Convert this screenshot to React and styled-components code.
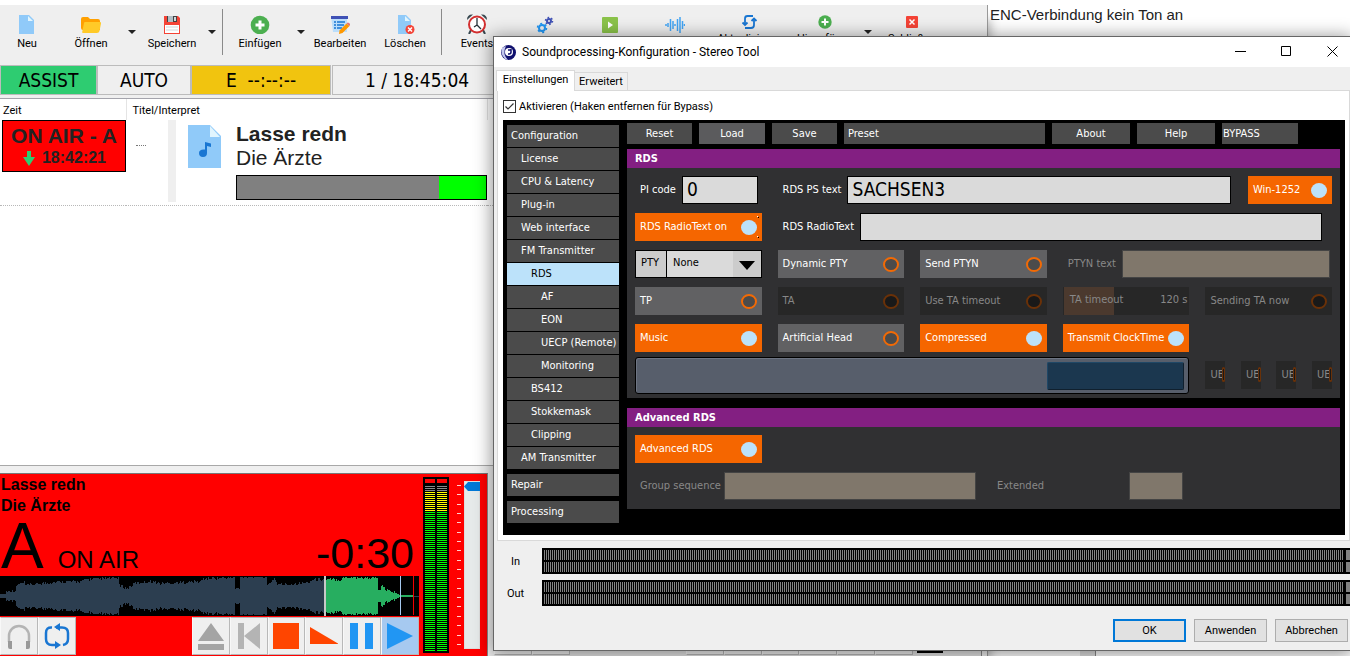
import React from "react";
import styled, { createGlobalStyle, css } from "styled-components";

const UI_FONT = 'Roboto, "Noto Sans", sans-serif';
const PANEL_FONT = '"DejaVu Sans Condensed", "DejaVu Sans", sans-serif';
const DECK_FONT = '"Liberation Sans", Arial, sans-serif';

const GlobalStyle = createGlobalStyle`
  * {
    box-sizing: border-box;
  }

  body {
    margin: 0;
    overflow: hidden;
    background: #fff;
    color: #000;
    font-family: ${UI_FONT};
    font-size: 11px;
  }

  button, input, select {
    margin: 0;
    border-radius: 0;
    font: inherit;
    color: inherit;
  }

  svg {
    display: block;
    flex: none;
  }
`

const Desktop = styled.div`
  position: relative;
  min-height: 100vh;
  overflow: hidden;
`

/* ---------- browser page behind the player ---------- */

const BackPage = styled.section`
  position: absolute;
  top: 0;
  right: 0;
  bottom: 0;
  width: 362px;
  display: flex;
  flex-direction: column;
  justify-content: space-between;
  background: #fff;

  p {
    margin: 0;
    padding: 6px 2px;
    font-family: ${DECK_FONT};
    font-size: 15px;
    line-height: 18px;
    color: #222;
  }
`

const BackFooter = styled.div`
  display: flex;
  height: 8px;

  div {
    width: 92px;
  }

  span {
    width: 16px;
    background: #e0e0e0;
    border-right: 1px solid #888;
  }
`

/* ---------- main window ---------- */

const MainWindow = styled.main`
  position: absolute;
  top: 5px;
  left: 0;
  right: 362px;
  bottom: 0;
  display: flex;
  flex-direction: column;
  border-right: 1px solid #999;
  background: #efefef;
  box-shadow: 6px 10px 10px -4px rgba(0, 0, 0, .3);
`

const Toolbar = styled.div`
  display: flex;
  align-items: flex-start;
  height: 60px;
  padding-top: 4px;
`

const ToolButton = styled.button`
  display: flex;
  flex-direction: column;
  align-items: center;
  width: ${props => props.$width}px;
  padding: ${props => (props.$raised ? 2 : 5)}px 0 0;
  border: 0;
  background: none;
  font-size: 11px;
  line-height: 16px;
  white-space: nowrap;

  svg {
    margin-bottom: ${props => (props.$raised ? 0 : 2)}px;
  }
`

const DropButton = styled.button`
  width: ${props => props.$width}px;
  height: 46px;
  padding: 0;
  border: 0;
  background: none;

  svg {
    margin: 0 auto;
  }
`

const Separator = styled.div`
  width: 1px;
  height: 46px;
  margin-left: 6px;
  background: #8a8a8a;
`

const StatusBar = styled.div`
  display: flex;
  height: 30px;
`

const StatusCell = styled.div`
  width: ${props => props.$width}px;
  margin-right: ${props => props.$after || 0}px;
  border: 1px solid #bcbcbc;
  background: ${props => props.$color || "#efefef"};
  font-family: ${PANEL_FONT};
  font-size: 19px;
  line-height: 28px;
  text-align: center;
  white-space: pre;
`

const ListArea = styled.div`
  flex: 1;
  margin-top: 3px;
  border-top: 1px solid #a4a4ac;
  border-bottom: 1px solid #a8a8a8;
  background: #fff;
`

const PlayTable = styled.table`
  width: 100%;
  table-layout: fixed;
  border-collapse: collapse;

  th {
    height: 21px;
    padding: 2px 0 0 3px;
    font-size: 11px;
    font-weight: normal;
    line-height: 16px;
    text-align: left;
    border-right: 1px solid #e4e4e4;
  }

  th + th {
    padding-left: 6px;
  }

  td {
    height: 85px;
    padding: 0;
    vertical-align: top;
    border-bottom: 1px dotted #b8b8b8;
  }
`

const OnAirCell = styled.div`
  height: 52px;
  margin-left: 2px;
  padding-top: 3px;
  border: 1px solid #000;
  background: #f00;
  color: #222;
  font-family: ${DECK_FONT};
  font-size: 21px;
  font-weight: bold;
  line-height: 24px;
  text-align: center;
  white-space: nowrap;

  div {
    display: flex;
    justify-content: center;
    align-items: center;
    gap: 7px;
    font-size: 16px;
    line-height: 20px;
  }
`

const TrackCell = styled.div`
  display: flex;
  height: 82px;
`

const TrackDots = styled.div`
  width: 42px;
  padding: 25px 0 0 10px;

  &::after {
    content: "";
    display: block;
    width: 10px;
    border-top: 1px dotted #777;
  }
`

const TrackStrip = styled.div`
  width: 8px;
  margin-right: 12px;
  background: #efefef;
`

const TrackArt = styled.div`
  padding-top: 5px;
`

const TrackText = styled.div`
  flex: 1;
  margin-left: 15px;
  padding-top: 2px;
  font-family: ${DECK_FONT};
  font-size: 21px;
  line-height: 24px;
  color: #222;
`

const ProgressTrack = styled.div`
  height: 25px;
  margin-top: 5px;
  border: 1px solid #000;
  background: #0f0;

  div {
    height: 100%;
    background: #808080;
  }
`

/* ---------- decks ---------- */

const DeckRow = styled.div`
  display: flex;
  gap: 6px;
  height: 190px;
  padding-top: 7px;
`

const DeckFrame = styled.section`
  display: flex;
  width: 488px;
  border-top: 1px solid #777;
  border-right: 1px solid #888;
  background: ${props => (props.$live ? "#f00" : "#e4e4e4")};
  color: #000;
  font-family: ${DECK_FONT};
`

const DeckMain = styled.div`
  display: flex;
  flex-direction: column;
  justify-content: flex-end;
  width: 419px;
  padding-bottom: 1px;
`

const DeckTitle = styled.div`
  flex: 1;
  padding-left: 1px;
  font-size: 16px;
  font-weight: bold;
  line-height: 21px;
`

const DeckInfo = styled.div`
  display: flex;
  align-items: baseline;
  height: 60px;
  padding: 0 5px 0 1px;
  line-height: 60px;
`

const DeckLetter = styled.span`
  font-size: 64px;
`

const DeckState = styled.span`
  flex: 1;
  margin-left: 14px;
  font-size: 24px;
`

const DeckTime = styled.span`
  font-size: 43px;
`

const Transport = styled.div`
  display: flex;
  height: 38px;
  margin-top: 1px;
`

const TransportButton = styled.button`
  display: flex;
  align-items: center;
  justify-content: center;
  width: 38px;
  margin-right: ${props => props.$after || 0}px;
  padding: 0;
  border: 1px solid #b8b8b8;
  border-left-color: #f8f8f8;
  background: ${props => (props.$on ? "#a6c9f0" : "#efefef")};
`

const MeterBox = styled.div`
  display: flex;
  gap: 2px;
  width: 26px;
  height: 176px;
  margin: 3px 8px 0 4px;
  padding: 2px;
  background: #000;
`

const MeterColumn = styled.div`
  flex: 1;
  display: flex;
  flex-direction: column;
`

const MeterPeak = styled.div`
  height: 4px;
  margin-bottom: 3px;
  background: ${props => props.$color};
`

const MeterBars = styled.div`
  flex: ${props => (props.$height ? "none" : 1)};
  height: ${props => props.$height || 0}px;
  background: repeating-linear-gradient(${props => props.$color} 0 1px, #000 1px 2px);
`

const FaderBox = styled.label`
  display: flex;
  gap: 3px;
  height: 168px;
  margin-top: 7px;
`

const FaderScale = styled.div`
  display: flex;
  flex-direction: column;
  justify-content: space-between;
  padding: 4px 0;

  i {
    width: 4px;
    height: 1px;
    background: #ffd0d0;
  }
`

const Fader = styled.input`
  appearance: none;
  writing-mode: vertical-lr;
  direction: rtl;
  width: 16px;
  height: 168px;
  border: 1px solid #ddd;
  background: #e6eaea;

  &::-webkit-slider-thumb {
    appearance: none;
    width: 16px;
    height: 9px;
    background: #0078d7;
    clip-path: polygon(0 50%, 25% 0, 100% 0, 100% 100%, 25% 100%);
  }
`

/* ---------- sound processing dialog ---------- */

const Dialog = styled.section`
  position: absolute;
  top: 36px;
  left: 493px;
  right: 0;
  border: 1px solid #666;
  border-right: 0;
  background: #efefef;
  box-shadow: 0 2px 16px 2px rgba(0, 0, 0, .4);
`

const TitleBar = styled.header`
  display: flex;
  align-items: center;
  height: 30px;
  padding-left: 6px;
  background: #fff;

  h1 {
    flex: 1;
    margin: 0 0 0 5px;
    font-size: 12px;
    font-weight: normal;
    line-height: 16px;
  }
`

const WindowButton = styled.button`
  display: flex;
  align-items: center;
  justify-content: center;
  width: 46px;
  height: 30px;
  padding: 0 0 2px;
  border: 0;
  background: none;

  &:last-child {
    margin-right: -5px;
  }
`

const TabBar = styled.div`
  display: flex;
  align-items: flex-end;
  height: 23px;
  padding: 3px 0 0 2px;
`

const Tab = styled.button`
  height: ${props => (props.$active ? 21 : 18)}px;
  width: ${props => (props.$active ? 79 : 53)}px;
  margin-bottom: ${props => (props.$active ? -1 : 0)}px;
  padding: 0 0 ${props => (props.$active ? 3 : 0)}px;
  border: 1px solid #d9d9d9;
  border-bottom: 0;
  border-left-width: ${props => (props.$active ? 1 : 0)}px;
  background: ${props => (props.$active ? "#fff" : "#f0f0f0")};
  font-size: 11px;
  line-height: 16px;
`

const TabPage = styled.div`
  margin: 0 0 0 3px;
  padding: 8px 4px 5px 5px;
  border: 1px solid #d9d9d9;
  background: #fff;
`

const CheckRow = styled.label`
  display: flex;
  align-items: center;
  gap: 3px;
  height: 14px;
  margin-bottom: 7px;

  input {
    appearance: none;
    width: 13px;
    height: 13px;
    border: 1px solid #333;
    background: #fff url("data:image/svg+xml,%3Csvg xmlns='http://www.w3.org/2000/svg' viewBox='0 0 11 11'%3E%3Cpath d='M1.5 5.5l2.500 2.500L9.500 2.500' fill='none' stroke='%23333' stroke-width='1.200'/%3E%3C/svg%3E");
  }
`

const StereoPanel = styled.div`
  display: flex;
  gap: 8px;
  padding: 3px 5px 12px 4px;
  background: #000;
  color: #fff;
  font-family: ${PANEL_FONT};
  font-size: 11px;
`

const SideMenu = styled.nav`
  display: flex;
  flex-direction: column;
  gap: 1px;
  width: 112px;
  padding-top: 2px;
`

const SideItem = styled.a`
  height: 22px;
  margin-top: ${props => (props.$apart ? 4 : 0)}px;
  padding-left: ${props => 4 + props.$level * 10}px;
  background: ${props => (props.$active ? "#bce2fa" : "#4b4b4b")};
  color: ${props => (props.$active ? "#000" : "#fff")};
  line-height: 22px;
  white-space: nowrap;
  text-decoration: none;
`

const PanelMain = styled.div`
  flex: 1;
  min-width: 0;
`

const PresetBar = styled.div`
  display: flex;
  gap: 7px;
  height: 21px;
  margin-bottom: 5px;
  padding-right: 42px;
`

const PresetButton = styled.button`
  width: ${props => props.$width}px;
  flex: ${props => (props.$grow ? 1 : "none")};
  padding: 0 ${props => props.$left || 0}px;
  border: 0;
  background: ${props => (props.$light ? "#5b5b5d" : "#4b4b4b")};
  line-height: 20px;
  text-align: ${props => (props.$left ? "left" : "center")};
`

const SectionTitle = styled.h2`
  margin: 0;
  padding-left: 8px;
  background: #831f82;
  font-size: 11px;
  font-weight: bold;
  line-height: 19px;
`

const SectionBody = styled.div`
  padding: 8px 8px ${props => props.$bottom}px;
  margin-bottom: ${props => props.$after || 0}px;
  background: #303032;
`

const ControlGrid = styled.div`
  display: grid;
  grid-template-columns: repeat(5, 1fr);
  grid-auto-rows: 28px;
  gap: 9px 16px;
`

const ToggleButton = styled.button`
  display: flex;
  align-items: center;
  justify-content: space-between;
  min-width: 0;
  width: ${props => (props.$width ? props.$width + "px" : "auto")};
  height: 28px;
  padding: 0 5px;
  border: 0;
  overflow: hidden;
  background: #616163;
  color: #fff;
  white-space: nowrap;

  span {
    padding-bottom: 2px;
  }

  i {
    flex: none;
    width: 16px;
    height: 15px;
    border: 2px solid #f26a05;
    border-radius: 50%;
    background: #4b4b4b;
  }

  ${props => props.$on && css`
    background: #f56600;

    i {
      border: 0;
      background: #bce2fa;
    }
  `}

  ${props => props.$focused && css`
    background:
      linear-gradient(#000, #000) right 3px top 4px / 1px 1px no-repeat,
      linear-gradient(#fff, #fff) right 4px top 3px / 1px 1px no-repeat,
      linear-gradient(#000, #000) right 3px bottom 3px / 1px 1px no-repeat,
      linear-gradient(#fff, #fff) right 4px bottom 4px / 1px 1px no-repeat,
      #f56600;
  `}

  &:disabled {
    background: #272727;
    color: #888;
  }

  &:disabled i {
    border-color: #6a3108;
    background: #191919;
  }
`

const SmallToggle = styled(ToggleButton)`
  position: relative;
  width: 20px;
  padding: 0 0 0 5px;
  overflow: visible;

  i {
    position: absolute;
    top: 6px;
    right: 0;
    width: 3px;
    border-width: 2px 1px;
    border-radius: 2px;
  }
`

const Field = styled.label`
  grid-column: span ${props => props.$span || 1};
  display: flex;
  align-items: center;
  gap: 6px;
  min-width: 0;
  padding: 0 ${props => props.$end || 0}px 0 5px;
  color: ${props => (props.$dim ? "#888" : "#fff")};
  white-space: nowrap;

  span {
    padding-bottom: 2px;
  }
`

const FieldGroup = styled.div`
  grid-column: span 4;
  display: flex;
  gap: 17px;

  label {
    flex: 1;
  }
`

const TextBox = styled.input`
  flex: 1;
  min-width: 0;
  width: 0;
  height: 28px;
  padding: 0 4px 3px;
  border: 1px solid #000;
  background: #dadada;
  color: #000;
  font-size: 19px;

  &:disabled {
    border-color: #444;
    background: #80776b;
  }
`

const SelectField = styled.label`
  display: flex;
  border: 1px solid #000;
  background: #ccc;
  color: #000;
  line-height: 24px;

  span {
    width: 31px;
    padding-left: 5px;
    border-right: 1px solid #000;
  }

  select {
    appearance: none;
    flex: 1;
    min-width: 0;
    padding: 0 0 2px 6px;
    border: 0;
    background: #dadada;
  }

  div {
    width: 28px;
    padding: 10px 6px;
  }
`

const TimeoutField = styled.label`
  position: relative;
  display: flex;
  justify-content: space-between;
  padding: 0 2px 0 7px;
  background: #272727;
  color: #888;
  line-height: 26px;

  span {
    z-index: 1;
  }

  input {
    position: absolute;
    inset: 0 0 0 1px;
    width: auto;
    appearance: none;
    background: linear-gradient(90deg, #4b392e 40%, #272727 40%);
  }

  input::-webkit-slider-thumb {
    appearance: none;
    width: 0;
    height: 28px;
  }
`

const ScrollRow = styled.div`
  display: grid;
  grid-template-columns: repeat(5, 1fr);
  column-gap: 16px;
  margin-top: 5px;
`

const ScrollSlider = styled.input`
  appearance: none;
  grid-column: span 4;
  width: 100%;
  height: 37px;
  margin: 0;
  padding: 0 4px;
  border: 1px solid #000;
  border-radius: 3px;
  background: #575e6b;
  box-shadow: inset 1px 1px #6d7482;

  &::-webkit-slider-thumb {
    appearance: none;
    width: 137px;
    height: 28px;
    border: 1px solid #1f4766;
    border-right-color: #10202e;
    border-bottom-color: #10202e;
    border-radius: 2px;
    background: #1b374f;
  }
`

const SmallToggles = styled.div`
  display: flex;
  justify-content: space-between;
  padding-top: 4px;
`

const SequenceRow = styled.div`
  display: flex;
  margin-top: 9px;

  label:first-child {
    width: 341px;
    gap: 3px;
  }

  label:last-child {
    width: 191px;
    margin-left: 16px;
    justify-content: space-between;
  }

  label:last-child input {
    flex: none;
    width: 54px;
  }
`

const LevelRow = styled.div`
  display: flex;
  align-items: center;
  height: 26px;
  margin-top: ${props => props.$before}px;

  span {
    width: 48px;
    padding-right: 5px;
    text-align: center;
  }
`

const LevelMeter = styled.div`
  flex: 1;
  display: grid;
  grid-template-columns: 1fr 4px;
  grid-auto-rows: 10px;
  gap: 2px 3px;
  height: 26px;
  padding: 2px 0 2px 2px;
  background: #000;

  i {
    background: repeating-linear-gradient(90deg, #828282 0 1px, #000 1px 2px);
  }

  i:nth-child(even) {
    background: #828282;
  }
`

const DialogFooter = styled.footer`
  display: flex;
  justify-content: flex-end;
  gap: 8px;
  padding: 13px 2px 8px;
`

const DialogButton = styled.button`
  width: 73px;
  height: 23px;
  padding: 0;
  border: ${props => (props.$primary ? "2px solid #0078d7" : "1px solid #adadad")};
  background: #e1e1e1;
  font-size: 11px;
`

/* ---------- icons ---------- */

const Svg = ({ size = 20, box = 20, height, boxHeight, children }) => (
  <svg width={size} height={height || size} viewBox={`0 0 ${box} ${boxHeight || box}`} aria-hidden="true">
    {children}
  </svg>
)

const NewIcon = () => (
  <Svg>
    <path d="M2 1h10l5 5v14H2z" fill="#90caf9" />
    <path d="M11 2v5h5z" fill="#e1f5fe" />
  </Svg>
)

const OpenIcon = () => (
  <Svg>
    <path d="M0 5q0-2 2-2h5l2 2h8q2 0 2 2v9H2q-2 0-2-2z" fill="#ffa000" />
    <path d="M4 8h15q1.500 0 1 1.500L18.500 17q-.5 2-2.500 2H2q-1 0-.8-1L3 9q.2-1 1-1z" fill="#ffca28" />
  </Svg>
)

const SaveIcon = () => (
  <Svg>
    <path d="M2 2h14l2 2v16H2z" fill="#f44336" />
    <path d="M5 2h10v6H5z" fill="#424242" />
    <path d="M6 2h5v6H6z" fill="#b0bec5" />
    <path d="M12 3h2v4h-2z" fill="#cfd8dc" />
    <path d="M3 11h14v8H3z" fill="#fff" />
    <path d="M4 13h12M4 16h12" stroke="#cfd8dc" />
  </Svg>
)

const AddIcon = () => (
  <Svg>
    <circle cx="10" cy="11" r="9.300" fill="#4caf50" />
    <path d="M10 6.500v9M5.500 11h9" stroke="#fff" strokeWidth="3" />
  </Svg>
)

const EditIcon = () => (
  <Svg>
    <path d="M1 2h16v16H3z" fill="#bbdefb" />
    <path d="M1 2h17v3H1z" fill="#3f51b5" />
    <path d="M4 8h2M7 8h8M4 11h2M7 11h7M4 14h2M7 14h5" stroke="#1976d2" strokeWidth="1.500" />
    <path d="M16.500 9.500l3 2.500-7 7-3.500 1 .5-3.500z" fill="#ff9800" />
    <path d="M16.500 9.500l3 2.500 .5-1q.5-1-1-2t-2 .2z" fill="#e57373" />
  </Svg>
)

const DeleteIcon = () => (
  <Svg>
    <path d="M3 1h8l5 5v14H3z" fill="#90caf9" />
    <path d="M10 2v5h5z" fill="#e1f5fe" />
    <circle cx="15" cy="15.500" r="4.500" fill="#f44336" />
    <path d="M13 13.500l4 4M17 13.500l-4 4" stroke="#fff" strokeWidth="1.500" />
  </Svg>
)

const AlarmIcon = () => (
  <Svg>
    <path d="M0 6Q0 0 6 .5zM20 6Q20 0 14 .5z" fill="#37474f" />
    <path d="M4 16l-2 4M16 16l2 4" stroke="#37474f" strokeWidth="2" />
    <circle cx="10" cy="10.500" r="8" fill="#fff" stroke="#d32f2f" strokeWidth="2" />
    <path d="M10 4v7l4 4M10 11l-3 2" fill="none" stroke="#263238" strokeWidth="1.300" />
  </Svg>
)

const Gear = ({ x, y, r, color }) => (
  <g stroke={color} fill="none">
    <circle cx={x} cy={y} r={r} strokeWidth="2" />
    <circle cx={x} cy={y} r={r + 1.5} strokeWidth="1.500" strokeDasharray={`${(r + 1.5) * 0.45} ${(r + 1.5) * 0.597}`} />
  </g>
)

const GearsIcon = () => (
  <Svg>
    <Gear x={7} y={14} r={3} color="#2196f3" />
    <Gear x={14} y={7} r={2} color="#3f51b5" />
  </Svg>
)

const PlayFileIcon = () => (
  <Svg>
    <rect x="2" y="3" width="16" height="16" rx="1" fill="#8bc34a" />
    <path d="M8 7.500l5 3.500-5 3.500z" fill="#fff" />
  </Svg>
)

const WaveIcon = () => (
  <Svg>
    <path d="M3 9v4M5.500 5v12M8 7v8M10 10v2M12.500 5v12M15 3v16M17.500 7v8M19.500 10v2M1 10v2" stroke="#42a5f5" strokeWidth="1.500" />
  </Svg>
)

const RefreshIcon = () => (
  <Svg>
    <g fill="none" stroke="#1976d2" strokeWidth="1.800">
      <path d="M14 5H8.500Q6 5 6 7.500V14M6 17h6q3 0 3-3V8" />
      <path d="M3.500 11.500L6 14l2.500-2.500M12.500 10L15 7.500l2.500 2.500" />
    </g>
  </Svg>
)

const AddSmallIcon = () => (
  <Svg>
    <circle cx="10" cy="11" r="6.700" fill="#4caf50" />
    <path d="M10 7.500v7M6.500 11h7" stroke="#fff" strokeWidth="2" />
  </Svg>
)

const CloseFileIcon = () => (
  <Svg>
    <rect x="4" y="5" width="12" height="12" rx="1" fill="#f44336" />
    <path d="M7.500 8.500l5 5M12.500 8.500l-5 5" stroke="#fff" strokeWidth="1.500" />
  </Svg>
)

const CaretIcon = () => (
  <Svg size={8} box={8} height={46} boxHeight={46}>
    <path d="M0 21h8l-4 4z" fill="#222" />
  </Svg>
)

const DownIcon = () => (
  <Svg size={13} box={13} height={15} boxHeight={15}>
    <path d="M5 0h4v6h4l-6 9-6-9h4z" fill="#2ecc71" />
  </Svg>
)

const TrackIcon = () => (
  <Svg size={33} box={33} height={43} boxHeight={43}>
    <path d="M0 0h22l11 11v32H0z" fill="#90caf9" />
    <path d="M22 1v11h10z" fill="#e1f5fe" />
    <path d="M17 17l6 1.500v3.500l-4-1v7q0 4-4 4t-4-4 6-3.500z" fill="#1976d2" />
  </Svg>
)

const AppIcon = () => (
  <Svg size={17} box={17}>
    <circle cx="8.500" cy="8.500" r="7.500" fill="#10106e" />
    <path d="M2 4Q0 10 5 15l3 1q-6-6-2-14z" fill="#c4c8ee" />
    <circle cx="9" cy="8" r="4" fill="#fff" />
    <path d="M8 6h3M11 5v3q0 2-2 2H8" stroke="#10106e" strokeWidth="1.500" fill="none" />
  </Svg>
)

/* ---------- waveform ---------- */

const ENVELOPE = [
  [0, 2], [5, 2], [6, 4], [15, 5], [17, 11], [24, 13], [25, 10], [40, 12], [60, 14], [80, 14],
  [86, 16], [104, 17], [118, 18], [119, 10], [127, 7], [134, 12], [150, 14], [160, 12], [200, 14],
  [203, 17], [234, 18], [235, 7], [239, 7], [240, 19], [266, 19], [267, 10], [274, 17], [277, 11],
  [290, 11], [308, 13], [312, 16], [341, 16], [342, 18], [377, 18], [378, 4], [382, 9], [386, 5],
  [392, 4], [400, 1], [419, 0],
]

const amplitude = (x) => {
  const i = Math.max(1, ENVELOPE.findIndex(point => point[0] >= x))
  const [x0, a0] = ENVELOPE[i - 1]
  const [x1, a1] = ENVELOPE[i]
  const base = a0 + (a1 - a0) * (x - x0) / (x1 - x0)
  const noise = Math.abs(Math.sin(x * 12.9898) * 43758.5453) % 1
  const jitter = base > 3 ? noise * 3 - 1 : 0
  return Math.max(0.5, Math.min(19, base + jitter))
}

const wavePath = (from, to) => {
  let d = ""
  for (let x = from; x < to; x++) {
    const a = Math.round(amplitude(x))
    d += `M${x} ${20 - a}h1v${2 * a || 1}h-1z`
  }
  return d
}

const Waveform = () => (
  <svg width="100%" height="40" viewBox="0 0 419 40" shapeRendering="crispEdges" aria-hidden="true">
    <rect width="419" height="40" fill="#000" />
    <path d={wavePath(0, 324)} fill="#2c3e50" />
    <path d={wavePath(326, 413)} fill="#27ae60" />
    <path d="M413 20h6" stroke="#2c3e50" />
    <rect x="324" width="2" height="40" fill="#c8c8c8" />
    <rect x="400" width="1" height="39" fill="#a6c9f0" />
    <rect x="413" width="1" height="39" fill="#f00000" />
  </svg>
)

const TRANSPORT = [
  {
    label: "Vorhören",
    art: (
      <>
        <path d="M4 20v-6a10 10 0 0 1 20 0v6" fill="none" stroke="#b4b4b4" strokeWidth="2.500" />
        <path d="M3 19h4v8H5q-2 0-2-2zM21 19h4v6q0 2-2 2h-2z" fill="#999" />
      </>
    ),
  },
  {
    label: "Schleife",
    after: 116,
    art: (
      <>
        <path d="M9 5.500Q3 5 3 11v6q0 6 6 6h5M13 5.500h6q6 0 6 5.500v6q0 5-5 6" fill="none" stroke="#1976d2" strokeWidth="2.500" />
        <path d="M17 1v8l-6-4zM12 19v8l6-4z" fill="#1976d2" />
      </>
    ),
  },
  { label: "Auswerfen", art: <path d="M14 1l13 18H1zM1 22h26v6H1z" fill="#a4a4a4" /> },
  { label: "Zum Anfang", art: <path d="M3 1h6v26H3zM25 1v26L9 14z" fill="#b4b4b4" /> },
  { label: "Stopp", art: <path d="M1 1h26v26H1z" fill="#ff4500" /> },
  { label: "Ausblenden", art: <path d="M0 5l29 17H0z" fill="#ff4500" /> },
  { label: "Pause", art: <path d="M2 1h8v26H2zM17 1h8v26h-8z" fill="#2196f3" /> },
  { label: "Abspielen", art: <path d="M1 1l26 13L1 27z" fill="#2196f3" /> },
]

/* ---------- parts ---------- */

const Meter = ({ live }) => (
  <MeterColumn>
    <MeterPeak $color={live ? "#f00" : "#333"} />
    {live && <MeterBars $color="#8a8a8a" $height={6} />}
    {live && <MeterBars $color="#ff0" $height={20} />}
    <MeterBars $color={live ? "#0f0" : "#555"} />
  </MeterColumn>
)

const Deck = ({ live, children }) => (
  <DeckFrame $live={live}>
    <DeckMain>
      {children}
      <Transport>
        {TRANSPORT.map((item, i) => (
          <TransportButton key={item.label} aria-label={item.label} $after={item.after} $on={live && i === TRANSPORT.length - 1}>
            <Svg size={28} box={28}>{item.art}</Svg>
          </TransportButton>
        ))}
      </Transport>
    </DeckMain>
    <MeterBox>
      <Meter live={live} />
      <Meter live={live} />
    </MeterBox>
    {live && (
      <FaderBox>
        <FaderScale>
          {Array.from({ length: 18 }, (_, i) => <i key={i} />)}
        </FaderScale>
        <Fader type="range" aria-label="Lautstärke" min="0" max="100" defaultValue="100" />
      </FaderBox>
    )}
  </DeckFrame>
)

const Toggle = ({ label, ...rest }) => (
  <ToggleButton aria-pressed={!!rest.$on} {...rest}>
    <span>{label}</span>
    <i />
  </ToggleButton>
)

const MENU = [
  ["Configuration", 0], ["License", 1], ["CPU & Latency", 1], ["Plug-in", 1], ["Web interface", 1],
  ["FM Transmitter", 1], ["RDS", 2], ["AF", 3], ["EON", 3], ["UECP (Remote)", 3], ["Monitoring", 3],
  ["BS412", 2], ["Stokkemask", 2], ["Clipping", 2], ["AM Transmitter", 1], ["Repair", 0], ["Processing", 0],
]

const PlayerWindow = () => (
  <MainWindow>
    <Toolbar>
      <ToolButton $width={54}><NewIcon />Neu</ToolButton>
      <ToolButton $width={74}><OpenIcon />Öffnen</ToolButton>
      <DropButton $width={8} aria-label="Zuletzt geöffnet"><CaretIcon /></DropButton>
      <ToolButton $width={72}><SaveIcon />Speichern</ToolButton>
      <DropButton $width={8} aria-label="Speichern unter"><CaretIcon /></DropButton>
      <Separator />
      <ToolButton $width={74}><AddIcon />Einfügen</ToolButton>
      <DropButton $width={8} aria-label="Einfügen als"><CaretIcon /></DropButton>
      <ToolButton $width={70}><EditIcon />Bearbeiten</ToolButton>
      <ToolButton $width={60}><DeleteIcon />Löschen</ToolButton>
      <Separator />
      <ToolButton $width={70}><AlarmIcon />Events</ToolButton>
      <ToolButton $width={66} aria-label="Einstellungen"><GearsIcon /></ToolButton>
      <ToolButton $width={64} aria-label="Wiedergabe"><PlayFileIcon /></ToolButton>
      <ToolButton $width={66} aria-label="Soundprocessing"><WaveIcon /></ToolButton>
      <ToolButton $width={82} $raised><RefreshIcon />Aktualisieren</ToolButton>
      <ToolButton $width={70} $raised><AddSmallIcon />Hinzufügen</ToolButton>
      <DropButton $width={16} aria-label="Hinzufügen als"><CaretIcon /></DropButton>
      <ToolButton $width={72} $raised><CloseFileIcon />Schließen</ToolButton>
    </Toolbar>
    <StatusBar>
      <StatusCell $width={97} $color="#2ecc71">ASSIST</StatusCell>
      <StatusCell $width={94}>AUTO</StatusCell>
      <StatusCell $width={140} $after={1} $color="#f1c40f">{"E  --:--:--"}</StatusCell>
      <StatusCell $width={170}>1 / 18:45:04</StatusCell>
    </StatusBar>
    <ListArea>
      <PlayTable>
        <colgroup>
          <col style={{ width: 126 }} />
          <col style={{ width: 361 }} />
          <col />
        </colgroup>
        <thead>
          <tr><th>Zeit</th><th>Titel/Interpret</th><th aria-label="Info" /></tr>
        </thead>
        <tbody>
          <tr>
            <td>
              <OnAirCell>
                ON AIR - A
                <div><DownIcon />18:42:21</div>
              </OnAirCell>
            </td>
            <td>
              <TrackCell>
                <TrackDots />
                <TrackStrip />
                <TrackArt><TrackIcon /></TrackArt>
                <TrackText>
                  <b>Lasse redn</b>
                  <div>Die Ärzte</div>
                  <ProgressTrack role="progressbar" aria-valuenow={81}>
                    <div style={{ width: "81%" }} />
                  </ProgressTrack>
                </TrackText>
              </TrackCell>
            </td>
            <td />
          </tr>
        </tbody>
      </PlayTable>
    </ListArea>
    <DeckRow>
      <Deck live>
        <DeckTitle>
          Lasse redn
          <br />
          Die Ärzte
        </DeckTitle>
        <DeckInfo>
          <DeckLetter>A</DeckLetter>
          <DeckState>ON AIR</DeckState>
          <DeckTime>-0:30</DeckTime>
        </DeckInfo>
        <Waveform />
      </Deck>
      <Deck />
    </DeckRow>
  </MainWindow>
)

const RdsSection = () => (
  <>
    <SectionTitle>RDS</SectionTitle>
    <SectionBody $bottom={4} $after={10}>
      <ControlGrid>
        <Field $end={4}>
          <span>PI code</span>
          <TextBox defaultValue="0" />
        </Field>
        <FieldGroup>
          <Field>
            <span>RDS PS text</span>
            <TextBox defaultValue="SACHSEN3" />
          </Field>
          <Toggle label="Win-1252" $on $width={84} />
        </FieldGroup>

        <Toggle label="RDS RadioText on" $on $focused />
        <Field $span={4} $end={10}>
          <span>RDS RadioText</span>
          <TextBox defaultValue="" />
        </Field>

        <SelectField>
          <span>PTY</span>
          <select defaultValue="None"><option>None</option></select>
          <div>
            <Svg size={16} box={16} height={9} boxHeight={9}><path d="M0 0h16L8 9z" fill="#000" /></Svg>
          </div>
        </SelectField>
        <Toggle label="Dynamic PTY" />
        <Toggle label="Send PTYN" />
        <Field $span={2} $end={2} $dim>
          <span>PTYN text</span>
          <TextBox disabled />
        </Field>

        <Toggle label="TP" />
        <Toggle label="TA" disabled />
        <Toggle label="Use TA timeout" disabled />
        <TimeoutField>
          <input type="range" min="0" max="300" defaultValue="120" disabled />
          <span>TA timeout</span>
          <span>120 s</span>
        </TimeoutField>
        <Toggle label="Sending TA now" disabled />

        <Toggle label="Music" $on />
        <Toggle label="Artificial Head" />
        <Toggle label="Compressed" $on />
        <Toggle label="Transmit ClockTime" $on />
      </ControlGrid>
      <ScrollRow>
        <ScrollSlider type="range" aria-label="RDS" min="0" max="100" defaultValue="100" />
        <SmallToggles>
          {[1, 2, 3, 4].map(n => (
            <SmallToggle key={n} disabled><span>UE</span><i /></SmallToggle>
          ))}
        </SmallToggles>
      </ScrollRow>
    </SectionBody>
  </>
)

const AdvancedSection = () => (
  <>
    <SectionTitle>Advanced RDS</SectionTitle>
    <SectionBody $bottom={9}>
      <ControlGrid>
        <Toggle label="Advanced RDS" $on />
      </ControlGrid>
      <SequenceRow>
        <Field $dim><span>Group sequence</span><TextBox disabled /></Field>
        <Field $dim><span>Extended</span><TextBox disabled /></Field>
      </SequenceRow>
    </SectionBody>
  </>
)

const Level = ({ label, before }) => (
  <LevelRow $before={before}>
    <span>{label}</span>
    <LevelMeter><i /><i /><i /><i /></LevelMeter>
  </LevelRow>
)

const StereoDialog = () => (
  <Dialog>
    <TitleBar>
      <AppIcon />
      <h1>Soundprocessing-Konfiguration - Stereo Tool</h1>
      <WindowButton aria-label="Minimieren"><Svg size={11} box={11}><path d="M0 5.500h11" stroke="#000" /></Svg></WindowButton>
      <WindowButton aria-label="Maximieren"><Svg size={11} box={11}><path d="M.5.5h9v9h-9z" fill="none" stroke="#000" /></Svg></WindowButton>
      <WindowButton aria-label="Fenster schließen"><Svg size={11} box={11}><path d="M.5.5l10 10M10.500.5l-10 10" stroke="#000" /></Svg></WindowButton>
    </TitleBar>
    <TabBar>
      <Tab $active>Einstellungen</Tab>
      <Tab>Erweitert</Tab>
    </TabBar>
    <TabPage>
      <CheckRow>
        <input type="checkbox" defaultChecked />
        Aktivieren (Haken entfernen für Bypass)
      </CheckRow>
      <StereoPanel>
        <SideMenu>
          {MENU.map(([label, level], i) => (
            <SideItem key={label} href="#" $level={level} $active={label === "RDS"} $apart={i > 0 && level === 0}>
              {label}
            </SideItem>
          ))}
        </SideMenu>
        <PanelMain>
          <PresetBar>
            <PresetButton $width={65}>Reset</PresetButton>
            <PresetButton $width={66} $light>Load</PresetButton>
            <PresetButton $width={65}>Save</PresetButton>
            <PresetButton $grow $left={4}>Preset</PresetButton>
            <PresetButton $width={78}>About</PresetButton>
            <PresetButton $width={78}>Help</PresetButton>
            <PresetButton $width={76} $left={1}>BYPASS</PresetButton>
          </PresetBar>
          <RdsSection />
          <AdvancedSection />
        </PanelMain>
      </StereoPanel>
    </TabPage>
    <Level label="In" before={7} />
    <Level label="Out" before={6} />
    <DialogFooter>
      <DialogButton $primary>OK</DialogButton>
      <DialogButton>Anwenden</DialogButton>
      <DialogButton>Abbrechen</DialogButton>
    </DialogFooter>
  </Dialog>
)

const App = () => (
  <Desktop>
    <GlobalStyle />
    <BackPage>
      <p>ENC-Verbindung kein Ton an</p>
      <BackFooter><div /><span /></BackFooter>
    </BackPage>
    <PlayerWindow />
    <StereoDialog />
  </Desktop>
)

export default App;
